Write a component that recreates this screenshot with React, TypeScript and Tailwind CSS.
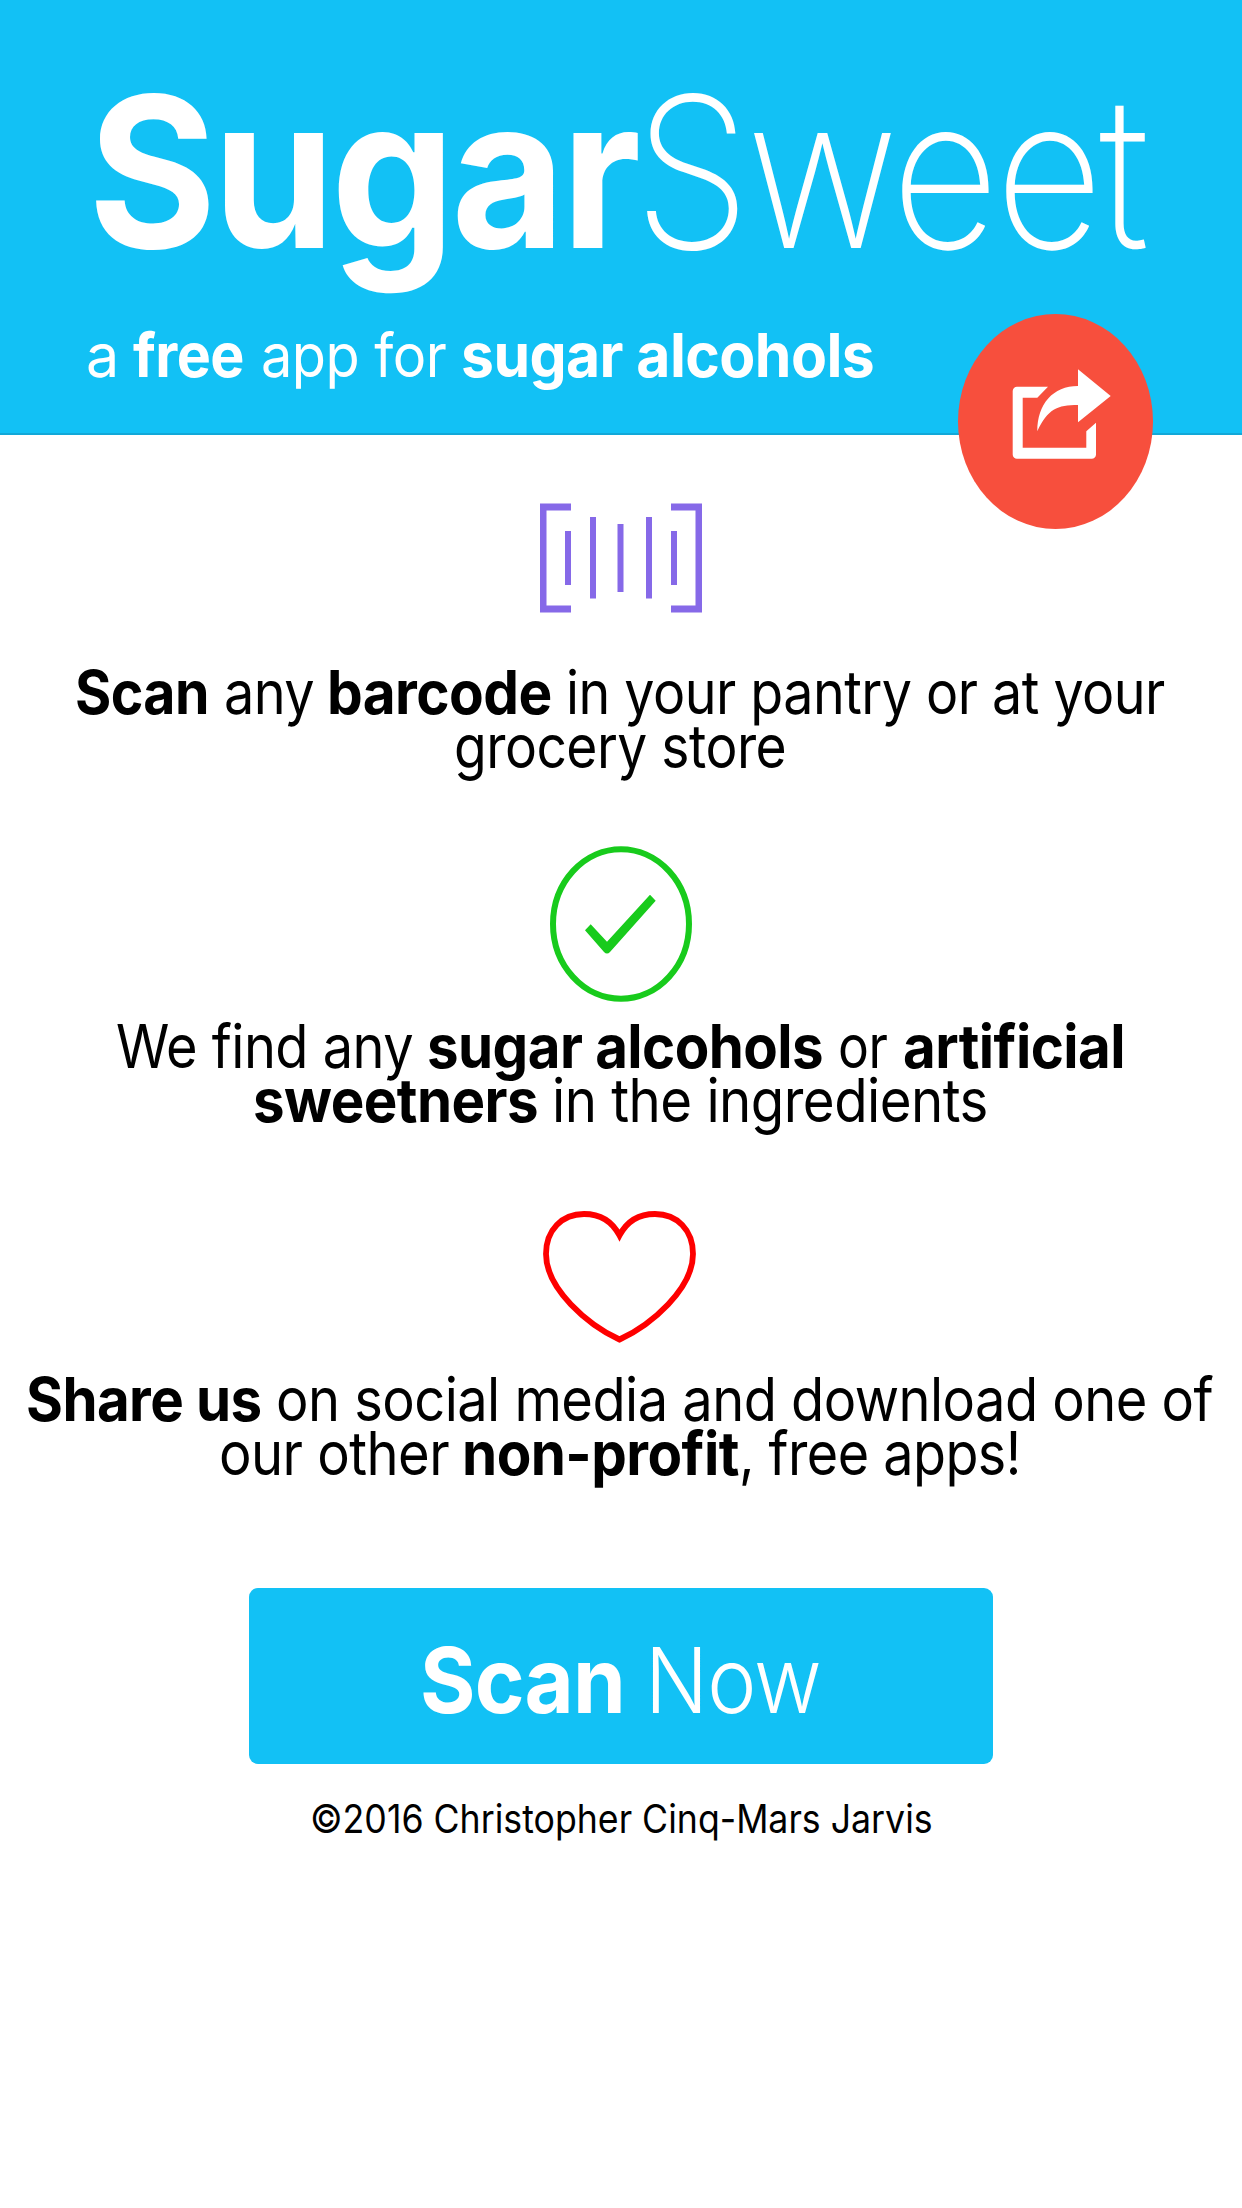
import { ReactNode, useLayoutEffect, useRef } from "react";

// One run of text, squeezed to an exact width
function Run({
  w,
  className = "",
  weight = "font-[380]",
  bold = false,
  children,
}: {
  w: number;
  className?: string;
  weight?: string;
  bold?: boolean;
  children: ReactNode;
}) {
  const ref = useRef<HTMLSpanElement>(null);
  useLayoutEffect(() => {
    const el = ref.current;
    if (el) el.style.transform = `scaleX(${w / el.offsetWidth})`;
  }, [w]);
  return (
    <span
      className={`inline-block whitespace-pre ${bold ? "font-bold" : weight} ${className}`}
      style={{ width: w }}
    >
      <span ref={ref} className="inline-block origin-left">
        {children}
      </span>
    </span>
  );
}

function Line({ children }: { children: ReactNode }) {
  return (
    <div className="flex h-[54px] items-center justify-center text-[60px] leading-[54px] tracking-[-0.01em]">
      {children}
    </div>
  );
}

function ShareIcon() {
  return (
    <svg viewBox="0 0 195 215" className="h-full w-full" fill="#fff">
      <path d="M90 72.7H59a4.3 4.3 0 0 0-4.3 4.3v63.4a4.3 4.3 0 0 0 4.3 4.3h74.7a4.3 4.3 0 0 0 4.3-4.3v-31.7l-9.7 8.6v16.4H64.7v-50h14.6Z" />
      <path d="M120 55.3L152.7 82 120 108.3V91c-21 0-30 4-40.7 26.3C79.3 90 95 72 120 72Z" />
    </svg>
  );
}

function BarcodeIcon() {
  return (
    <svg
      viewBox="0 0 162 110"
      className="mt-[68px] h-[110px] w-[162px]"
      fill="#8669e8"
    >
      <path d="M0 .5h31v7H6.5v95H31v7H0ZM162 .5h-31v7h24.500v95H131v7h31Z" />
      <path d="M25 28h6v54h-6ZM50 14h6v81.500h-6ZM77.500 21h6v68h-6ZM106 14h6v81.500h-6ZM131 28h6v54h-6Z" />
    </svg>
  );
}

function CheckIcon() {
  return (
    <svg viewBox="0 0 142 156" className="mt-[73px] mr-px h-[156px] w-[142px]">
      <ellipse
        cx="71"
        cy="78"
        rx="68"
        ry="74.800"
        fill="none"
        stroke="#18cb1c"
        strokeWidth="6"
      />
      <path
        d="M40.700 78.300L57 95.700L100 48.700L105.700 54.700L60 106Q57 109 54 106L35 84.300Z"
        fill="#18cb1c"
      />
    </svg>
  );
}

function HeartIcon() {
  return (
    <svg viewBox="0 0 153 132" className="mt-[84px] mr-[3px] h-[132px] w-[153px]">
      <path
        d="M76.500 24.500C69 10 57 3 41 3C19 3 3 19 3 43C3 78 45 114 76.500 128.500C108 114 150 78 150 43C150 19 134 3 112 3C96 3 84 10 76.500 24.500Z"
        fill="none"
        stroke="#fe0000"
        strokeWidth="5.800"
      />
    </svg>
  );
}

export default function App() {
  return (
    <div className="flex h-[2208px] w-[1242px] flex-col items-center overflow-hidden bg-white font-['Inter',sans-serif] text-black">
      <header className="relative h-[435px] w-full border-b-2 border-[#12a8d8] bg-[#12c1f5] text-white">
        <h1 className="flex pt-[47px] pl-[88px] text-[210px] leading-[250px] tracking-[-0.02em]">
          <Run w={549} bold>
            Sugar
          </Run>
          <Run w={512} weight="font-[220]" className="-ml-[3px]">
            Sweet
          </Run>
        </h1>
        <p className="mt-[15px] flex pl-[86px] text-[61px] leading-[86px] tracking-[-0.01em]">
          <Run w={33}>a</Run>
          <Run w={111} bold className="ml-[14px]">
            free
          </Run>
          <Run w={185} className="ml-[17px]">
            app for
          </Run>
          <Run w={413} bold className="ml-[15px]">
            sugar alcohols
          </Run>
        </p>
        <button className="absolute top-[314px] left-[958px] h-[215px] w-[195px] rounded-[50%] bg-[#f74f3d]">
          <ShareIcon />
        </button>
      </header>

      <BarcodeIcon />
      <div className="mt-[52px]">
        <Line>
          <Run w={134} bold>
            Scan
          </Run>
          <Run w={90} className="ml-[15px]">
            any
          </Run>
          <Run w={225} bold className="ml-[13px]">
            barcode
          </Run>
          <Run w={599} className="mr-[2px] ml-[14px]">
            in your pantry or at your
          </Run>
        </Line>
        <Line>
          <Run w={332} className="mr-[2px]">
            grocery store
          </Run>
        </Line>
      </div>

      <CheckIcon />
      <div className="mt-[17px]">
        <Line>
          <Run w={297}>We find any</Run>
          <Run w={396} bold className="ml-[14px]">
            sugar alcohols
          </Run>
          <Run w={49} className="ml-[15px]">
            or
          </Run>
          <Run w={222} bold className="mr-px ml-[16px]">
            artificial
          </Run>
        </Line>
        <Line>
          <Run w={285} bold>
            sweetners
          </Run>
          <Run w={436} className="mr-[2px] ml-[14px]">
            in the ingredients
          </Run>
        </Line>
      </div>

      <HeartIcon />
      <div className="mt-[29px]">
        <Line>
          <Run w={236} bold>
            Share us
          </Run>
          <Run w={937} className="mr-[3px] ml-[14px]">
            on social media and download one of
          </Run>
        </Line>
        <Line>
          <Run w={230}>our other</Run>
          <Run w={277} bold className="ml-[13px]">
            non-profit
          </Run>
          <Run w={282} className="mr-[3px]">
            , free apps!
          </Run>
        </Line>
      </div>

      <button className="mt-[108px] flex h-[176px] w-[744px] items-center justify-center rounded-[9px] bg-[#12c1f5] pt-[9px] text-[91px] tracking-[-0.01em] text-white">
        <Run w={205} bold>
          Scan
        </Run>
        <Run w={176} weight="font-[320]" className="mr-[2px] ml-[20px]">
          Now
        </Run>
      </button>
      <p className="mt-[28px] text-[39px] leading-[54px]">
        <Run w={623}>©2016 Christopher Cinq-Mars Jarvis</Run>
      </p>
    </div>
  );
}
